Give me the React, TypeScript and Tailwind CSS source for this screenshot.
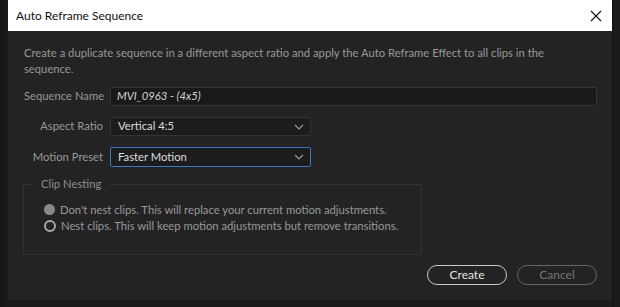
import React from "react";

const Chevron = () => (
  <svg width="10" height="6" viewBox="0 0 10 6" fill="none">
    <path d="M1 1 L5 5 L9 1" stroke="#9a9a9a" strokeWidth="1.2" />
  </svg>
);

export default function App() {
  return (
    <div
      className="w-[620px] h-[307px] bg-[#1b1b1b] flex overflow-hidden"
      style={{ fontFamily: 'Lato, "Open Sans", sans-serif' }}
    >
      <div className="w-[8px] shrink-0 border-l-[3px] border-[#161616]" />
      <div className="w-[604px] h-[300px] flex flex-col bg-[#232323]">
        <div className="h-[31px] bg-white flex items-center justify-between pl-[8px] pr-[10px] shrink-0">
          <span className="text-[12px] text-[#111]">Auto Reframe Sequence</span>
          <svg width="12" height="12" viewBox="0 0 12 12">
            <path d="M1 1 L11 11 M11 1 L1 11" stroke="#111" strokeWidth="1.1" />
          </svg>
        </div>
        <div className="flex flex-col pl-[16px] pr-[15px] pt-[14px] text-[11.25px] text-[#999] whitespace-nowrap">
          <p className="leading-[16px]">
            Create a duplicate sequence in a different aspect ratio and apply the Auto Reframe Effect to all clips in the
            <br />
            sequence.
          </p>
          <div className="flex items-center mt-[10px] gap-[7px]">
            <span className="w-[79px] text-right">Sequence Name</span>
            <div className="flex-1 h-[19px] bg-[#191919] border border-[#343434] rounded-[2px] flex items-center px-[6px] italic text-[#d4d4d4]">
              MVI_0963 - (4x5)
            </div>
          </div>
          <div className="flex items-center mt-[11px] gap-[7px]">
            <span className="w-[79px] text-right">Aspect Ratio</span>
            <div className="w-[201px] h-[19px] bg-[#1c1c1c] border border-[#333] rounded-[2px] flex items-center justify-between pl-[7px] pr-[6px] text-[#dcdcdc]">
              <span>Vertical 4:5</span>
              <Chevron />
            </div>
          </div>
          <div className="flex items-center mt-[11px] gap-[7px]">
            <span className="w-[79px] text-right">Motion Preset</span>
            <div className="w-[201px] h-[20px] bg-[#1c1c1c] border border-[#3a78c2] rounded-[2px] flex items-center justify-between pl-[7px] pr-[6px] text-[#dcdcdc]">
              <span>Faster Motion</span>
              <Chevron />
            </div>
          </div>
          <fieldset className="mt-[9px] w-[399px] h-[79px] border border-[#333] rounded-[2px] pl-[20px] -ml-[1px]">
            <legend className="px-[8px] -ml-[11px] text-[#8e8e8e]">Clip Nesting</legend>
            <div className="mt-[9px] flex items-center gap-[5px] leading-[16px]">
              <span className="w-[11px] h-[11px] rounded-full bg-[#8a8a8a]" />
              <span>Don't nest clips. This will replace your current motion adjustments.</span>
            </div>
            <div className="flex items-center gap-[5px] leading-[16px]">
              <span className="w-[12px] h-[12px] rounded-full border-[2px] border-[#a8a8a8]" />
              <span>Nest clips. This will keep motion adjustments but remove transitions.</span>
            </div>
          </fieldset>
          <div className="flex justify-end gap-[10px] mt-[10px]">
            <div className="w-[80px] h-[20px] rounded-full border border-[#c8c8c8] flex items-center justify-center text-[12px] text-[#e6e6e6]">
              Create
            </div>
            <div className="w-[80px] h-[20px] rounded-full border border-[#666] flex items-center justify-center text-[12px] text-[#777]">
              Cancel
            </div>
          </div>
        </div>
      </div>
      <div className="w-[8px] shrink-0 border-l-[2px] border-[#151515]" />
    </div>
  );
}
